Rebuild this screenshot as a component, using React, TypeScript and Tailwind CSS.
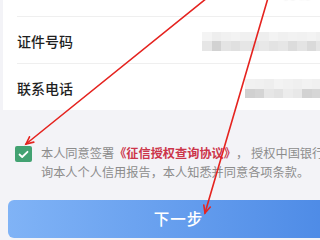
import React from "react";

const FONT = "font-['Noto_Sans_CJK_SC','Noto_Sans',sans-serif]";

/* blurred (mosaic) values */
const idShades = [
  ["#f4f4f4", "#eeeeee", "#f1f1f1", "#f3f3f3", "#f0f0f0", "#f2f2f2", "#eeeeee", "#f3f3f3", "#f0f0f0", "#f2f2f2", "#f1f1f1", "#f3f3f3", "#f0f0f0", "#f2f2f2"],
  ["#e6e6e6", "#d2d2d2", "#e4e4e4", "#e0e0e0", "#e6e6e6", "#e2e2e2", "#e8e8e8", "#e3e3e3", "#e6e6e6", "#dcdcdc", "#e4e4e4", "#dadada", "#e5e5e5", "#e0e0e0"],
];

const phoneShades = [
  ["#f1f1f1", "#f0f0f0", "#eeeeee", "#f3f3f3", "#f1f1f1", "#efefef", "#f2f2f2", "#f0f0f0", "#f1f1f1", "#f0f0f0"],
  ["#d0d0d0", "#d4d4d4", "#e6e6e6", "#e2e2e2", "#ececec", "#e8e8e8", "#d2d2d2", "#d6d6d6", "#e4e4e4", "#e0e0e0"],
];

const Mosaic = ({ shades }: { shades: string[][] }) => (
  <div className="flex flex-col ml-auto">
    {shades.map((row, i) => (
      <div key={i} className="flex">
        {row.map((c, j) => (
          <div key={j} className="w-[9.5px] h-[9.5px]" style={{ backgroundColor: c }} />
        ))}
      </div>
    ))}
  </div>
);

const App = () => {
  return (
    <div className={`relative w-[320px] h-[240px] overflow-hidden bg-[#f3f3f7] ${FONT}`}>
      <div className="w-[357px]">
        {/* ===== Form card ===== */}
        <div className="mx-[3px] -mt-[30px] bg-white px-[14px]">
          <div className="h-[47px] flex items-center border-b border-[#efefef]">
            <span className="text-[14px] font-medium text-[#1f1f1f] mb-[4px]">姓名</span>
            <span className="ml-auto text-[14px] text-[#999999] blur-[1px] mb-[4px]">身份证件</span>
          </div>
          <div className="h-[47px] flex items-center border-b border-[#efefef]">
            <span className="text-[14px] font-medium text-[#1f1f1f] mt-[2px]">证件号码</span>
            <div className="ml-auto pt-[2px] mr-[5px]">
              <Mosaic shades={idShades} />
            </div>
          </div>
          <div className="h-[46px] flex items-center">
            <span className="text-[14px] font-medium text-[#1f1f1f] mt-[2px]">联系电话</span>
            <div className="ml-auto pt-[3px]">
              <Mosaic shades={phoneShades} />
            </div>
          </div>
        </div>

        {/* ===== Agreement ===== */}
        <div className="flex gap-[9px] pl-[15px] pt-[34px]">
          <div className="w-[17px] h-[16px] mt-[2px] rounded-[2px] bg-[#43a272] flex items-center justify-center shrink-0">
            <svg width="11" height="9" viewBox="0 0 11 9">
              <polyline points="1.5,4.5 4.2,7 9.5,1.8" fill="none" stroke="white" strokeWidth="1.8" strokeLinecap="round" strokeLinejoin="round" />
            </svg>
          </div>
          <div className="text-[12.2px] leading-[19px] text-[#8c8c8c] whitespace-nowrap">
            <div>
              本人同意签署
              <span className="font-bold text-[#cc354a]">《征信授权查询协议》</span>
              <span className="ml-[6px] mr-[3px]">，</span>
              授权中国银行征信中心查
            </div>
            <div>询本人个人信用报告，本人知悉并同意各项条款。</div>
          </div>
        </div>

        {/* ===== Next button ===== */}
        <div className="mx-[8px] mt-[18px] h-[38px] rounded-[6px] bg-gradient-to-r from-[#80b3f6] to-[#4a88e5] flex items-center justify-center">
          <span className="text-[15.5px] text-white font-medium tracking-[1px]">下一步</span>
        </div>
      </div>

      {/* ===== Annotation arrows ===== */}
      <svg className="absolute inset-0 pointer-events-none" width="320" height="240" viewBox="0 0 320 240">
        <g stroke="#e5231f" strokeWidth="1.6" strokeLinecap="round" fill="none">
          <line x1="207" y1="-2" x2="26" y2="144" />
          <polyline points="33.8,142.1 26,144 29.5,136.8" />
          <line x1="268" y1="-2" x2="205" y2="213" />
          <polyline points="210.3,207 205,213 203.8,205.1" />
        </g>
      </svg>
    </div>
  );
};

export default App;
